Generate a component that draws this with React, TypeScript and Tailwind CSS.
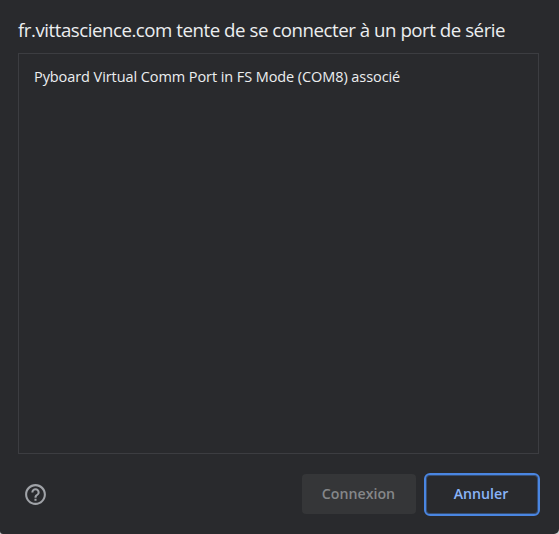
import React from "react";
import { MdHelpOutline } from "react-icons/md";

export default function App() {
  return (
    <div className="h-[534px] w-[559px] bg-[#d0d0d2]">
      <div className="flex h-full flex-col overflow-hidden rounded-br-[5px] rounded-bl-[3px] bg-[#292a2d] pt-4 pr-5 pl-[18px] font-['Open_Sans','Noto_Sans',sans-serif] text-[#eceef0]">
        <h1 className="h-[37px] whitespace-nowrap text-[18.7px] leading-[27px] tracking-[-0.475px]">
          <span>fr.vittascience.com tente de se connecter à un port de série</span>
        </h1>
        <ul className="h-[401px] w-[521px] border border-[#3c3d41] pt-[13px] pl-[15px]">
          <li className="whitespace-nowrap text-[14.5px] leading-5 tracking-[-0.08px]">
            <span>Pyboard Virtual Comm Port in FS Mode (COM8) associé</span>
          </li>
        </ul>
        <div className="mt-[19px] flex h-[43px] items-start">
          <button className="mt-[9px] ml-[5px] text-[#a0a3a8]" aria-label="Aide">
            <MdHelpOutline size={25} />
          </button>
          <button className="mt-px ml-auto h-10 w-[114px] rounded bg-[#353638] pr-px pb-px text-[14.2px] font-semibold text-[#858789]">
            Connexion
          </button>
          <button className="-mr-px ml-2 h-[43px] w-[116px] rounded-[6px] border-2 border-[#4a86e2] pr-[2px] pb-[2px] text-[14.2px] font-semibold text-[#8ab4f8] ring-1 ring-inset ring-[#4a86e2]/40">
            Annuler
          </button>
        </div>
      </div>
    </div>
  );
}
